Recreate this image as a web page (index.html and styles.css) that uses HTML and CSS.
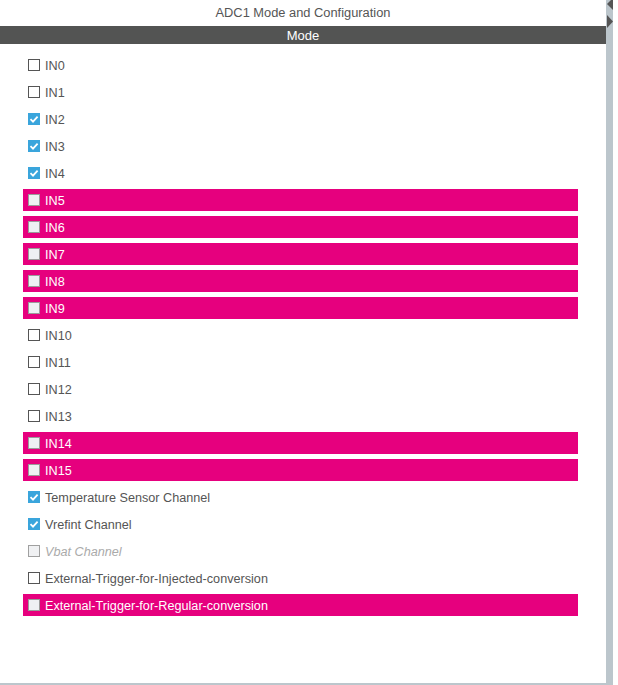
FILE: index.html
```html
<!DOCTYPE html>
<html>
<head>
<meta charset="utf-8">
<link rel="stylesheet" href="styles.css">
</head>
<body>
<div class="wrap">
  <div class="panel">
    <div class="title">ADC1 Mode and Configuration</div>
    <div class="bar">Mode</div>
    <div class="list">
      <div class="row"><span class="cb"></span><span class="lbl">IN0</span></div>
      <div class="row"><span class="cb"></span><span class="lbl">IN1</span></div>
      <div class="row"><span class="cb on"><svg viewBox="0 0 12 12" width="12" height="12"><polyline points="2.5,6.2 5,8.6 9.6,3.6" fill="none" stroke="#fff" stroke-width="1.8"/></svg></span><span class="lbl">IN2</span></div>
      <div class="row"><span class="cb on"><svg viewBox="0 0 12 12" width="12" height="12"><polyline points="2.5,6.2 5,8.6 9.6,3.6" fill="none" stroke="#fff" stroke-width="1.8"/></svg></span><span class="lbl">IN3</span></div>
      <div class="row"><span class="cb on"><svg viewBox="0 0 12 12" width="12" height="12"><polyline points="2.5,6.2 5,8.6 9.6,3.6" fill="none" stroke="#fff" stroke-width="1.8"/></svg></span><span class="lbl">IN4</span></div>
      <div class="row hot"><span class="cb"></span><span class="lbl">IN5</span></div>
      <div class="row hot"><span class="cb"></span><span class="lbl">IN6</span></div>
      <div class="row hot"><span class="cb"></span><span class="lbl">IN7</span></div>
      <div class="row hot"><span class="cb"></span><span class="lbl">IN8</span></div>
      <div class="row hot"><span class="cb"></span><span class="lbl">IN9</span></div>
      <div class="row"><span class="cb"></span><span class="lbl">IN10</span></div>
      <div class="row"><span class="cb"></span><span class="lbl">IN11</span></div>
      <div class="row"><span class="cb"></span><span class="lbl">IN12</span></div>
      <div class="row"><span class="cb"></span><span class="lbl">IN13</span></div>
      <div class="row hot"><span class="cb"></span><span class="lbl">IN14</span></div>
      <div class="row hot"><span class="cb"></span><span class="lbl">IN15</span></div>
      <div class="row"><span class="cb on"><svg viewBox="0 0 12 12" width="12" height="12"><polyline points="2.5,6.2 5,8.6 9.6,3.6" fill="none" stroke="#fff" stroke-width="1.8"/></svg></span><span class="lbl">Temperature Sensor Channel</span></div>
      <div class="row"><span class="cb on"><svg viewBox="0 0 12 12" width="12" height="12"><polyline points="2.5,6.2 5,8.6 9.6,3.6" fill="none" stroke="#fff" stroke-width="1.8"/></svg></span><span class="lbl">Vrefint Channel</span></div>
      <div class="row disabled"><span class="cb"></span><span class="lbl">Vbat Channel</span></div>
      <div class="row"><span class="cb"></span><span class="lbl">External-Trigger-for-Injected-conversion</span></div>
      <div class="row hot"><span class="cb"></span><span class="lbl">External-Trigger-for-Regular-conversion</span></div>
    </div>
  </div>
  <div class="strip">
    <svg viewBox="0 0 7 30" width="7" height="30"><polygon points="7,-2 7,10 1,4" fill="#555"/><polygon points="1,15 1,28 7,21.5" fill="#555"/></svg>
  </div>
</div>
</body>
</html>
```
FILE: styles.css
```css
html, body {
  margin: 0;
  padding: 0;
  background: #fff;
}
body {
  width: 618px;
  height: 685px;
  overflow: hidden;
  font-family: "Liberation Sans", Arial, sans-serif;
  font-size: 13px;
  color: #555;
}
.wrap {
  display: flex;
  height: 685px;
}
.panel {
  width: 606px;
  height: 683px;
  border-bottom: 2px solid #bcc6cc;
}
.title {
  height: 26px;
  line-height: 25px;
  text-align: center;
  color: #555;
  font-size: 12.85px;
}
.bar {
  height: 18px;
  line-height: 19px;
  background: #535453;
  color: #fff;
  text-align: center;
}
.list {
  padding-top: 10px;
  padding-left: 23px;
  width: 555px;
}
.row {
  height: 22px;
  margin-bottom: 5px;
  display: flex;
  align-items: center;
  padding-left: 5px;
  gap: 5px;
}
.cb {
  width: 10px;
  height: 10px;
  border: 1px solid #555;
  background: #fff;
  flex: none;
  position: relative;
}
.cb svg {
  position: absolute;
  left: -1px;
  top: -1px;
}
.cb.on {
  background: #3aa5dc;
  border-color: #3aa5dc;
}
.lbl {
  line-height: 22px;
  padding-top: 2px;
  font-size: 12.65px;
}
.row.hot {
  background: #e6007e;
}
.row.hot .cb {
  background: #eef0f3;
  border-color: #9b9b9b;
}
.row.hot .lbl {
  color: #fff;
}
.row.disabled .cb {
  background: #f0f1f3;
  border-color: #a0a0a0;
}
.row.disabled .lbl {
  color: #aaa;
  font-style: italic;
}
.strip {
  width: 7px;
  height: 685px;
  background: #bcc6cc;
}
.strip svg {
  display: block;
}
```
